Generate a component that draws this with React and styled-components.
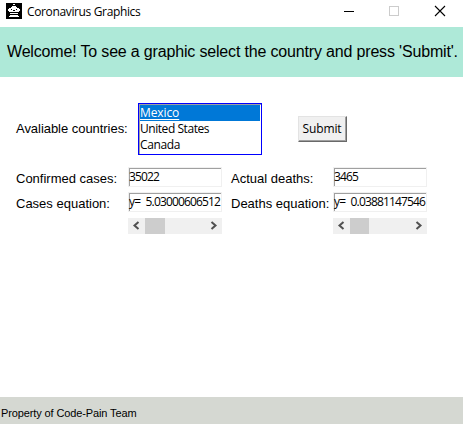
import React from "react";
import styled, { createGlobalStyle } from "styled-components";

const Global = createGlobalStyle`
  * { box-sizing: border-box; }
  body { margin: 0; background: #fff; overflow: hidden; }
`;

const Window = styled.div`
  width: 463px;
  height: 424px;
  display: flex;
  flex-direction: column;
  background: #fff;
  color: #000;
  font-family: "Liberation Sans", Arial, sans-serif;
  white-space: nowrap;
`;

const TitleBar = styled.header`
  height: 27px;
  flex: none;
  display: flex;
  align-items: flex-start;
  padding-left: 6px;
`;

const AppIcon = styled.svg`
  display: block;
  flex: none;
  margin-top: 3px;
`;

const Title = styled.div`
  flex: 1;
  margin-left: 5px;
  font: 12px/16px "Open Sans", "Noto Sans", sans-serif;
  letter-spacing: -0.36px;
  padding-top: 4px;
`;

const Controls = styled.div`
  display: flex;
`;

const Control = styled.svg`
  display: block;
  width: 46px;
  height: 22px;
`;

const Banner = styled.div`
  height: 50px;
  flex: none;
  padding-left: 7px;
  background: #aee9d8;
  font-size: 16px;
  line-height: 49px;
  letter-spacing: -0.17px;
`;

const Body = styled.main`
  flex: 1;
  padding: 26px 0 0 16px;
`;

const CountryRow = styled.div`
  display: flex;
  align-items: center;
  height: 52px;
`;

const Label = styled.label`
  width: ${(p) => p.$width}px;
  flex: none;
  font-size: 13px;
  line-height: 16px;
  letter-spacing: -0.04px;
`;

const ListBox = styled.div`
  width: 124px;
  height: 52px;
  border: 1px solid #0000ff;
  padding: 1px 1px 0 0;
  box-shadow: inset 1px 1px #a0a0a0;
`;

const Option = styled.div`
  height: 16px;
  margin-left: 1px;
  font: 12px/16px "Open Sans", "Noto Sans", sans-serif;
  letter-spacing: ${(p) => p.$track}px;
  color: ${(p) => (p.$selected ? "#fff" : "#000")};
  background: ${(p) => (p.$selected ? "#0078d7" : "transparent")};
  text-decoration: ${(p) => (p.$selected ? "underline" : "none")};
  text-underline-offset: 2px;
`;

const SubmitButton = styled.button`
  width: 49px;
  height: 26px;
  margin-left: 36px;
  padding: 0 1px 0 0;
  background: #f0f0f0;
  border: 1px solid;
  border-color: #e3e3e3 #696969 #696969 #e3e3e3;
  box-shadow: inset -1px -1px #a0a0a0;
  font: 12px/16px "Open Sans", "Noto Sans", sans-serif;
  letter-spacing: -0.15px;
  color: #000;
`;

const Results = styled.div`
  display: grid;
  grid-template-columns: 112px 103px 102px 94px;
  grid-template-rows: 20px 20px 16px;
  row-gap: 5px;
  margin-top: 12px;
`;

const FieldLabel = styled(Label)`
  padding-top: 4px;
  letter-spacing: 0;
`;

const Entry = styled.div`
  width: 94px;
  height: 20px;
  border: 1px solid #f0f0f0;
  box-shadow: inset 1px 1px #a0a0a0, inset -1px -1px #fff;
  padding-top: 1px;
  font: 12px/16px "Open Sans", "Noto Sans", sans-serif;
  letter-spacing: -0.86px;
  word-spacing: 3.2px;
`;

const ScrollBar = styled.div`
  width: 94px;
  height: 16px;
  margin-top: 1px;
  display: flex;
  background: #f0f0f0;
`;

const Arrow = styled.svg`
  display: block;
  width: 17px;
  height: 16px;
  flex: none;
`;

const Track = styled.div`
  flex: 1;
`;

const Thumb = styled.div`
  width: ${(p) => p.$width}px;
  height: 16px;
  background: #cdcdcd;
`;

const Footer = styled.footer`
  height: 27px;
  flex: none;
  padding-left: 1px;
  background: #d5d8d2;
  font-size: 11px;
  line-height: 32px;
  letter-spacing: -0.12px;
`;

function HorizontalScroll({ thumb }) {
  return (
    <ScrollBar>
      <Arrow viewBox="0 0 17 16">
        <path d="M10.5 4 6.5 7.5l4 3.5" fill="none" stroke="#505050" strokeWidth="2" />
      </Arrow>
      <Track>
        <Thumb $width={thumb} />
      </Track>
      <Arrow viewBox="0 0 17 16">
        <path d="M6.5 4l4 3.5-4 3.5" fill="none" stroke="#505050" strokeWidth="2" />
      </Arrow>
    </ScrollBar>
  );
}

export default function App() {
  return (
    <Window>
      <Global />
      <TitleBar>
        <AppIcon width="16" height="16" viewBox="0 0 16 16" shapeRendering="crispEdges">
          <rect width="16" height="16" />
          <path fill="#fff" d="M7 1h2v1H7zM6 3h4v1H6zM5 4h6v1H5zM3 5h10v1H3zM2 6h12v2H2zM3 8h10v1H3zM4 10h8v1H4zM4 12h8v1H4zM3 13h10v1H3z" />
          <path d="M5 6h1v1H5zM10 6h1v1h-1zM7 7h2v1H7z" />
        </AppIcon>
        <Title>Coronavirus Graphics</Title>
        <Controls>
          <Control viewBox="0 0 46 22" shapeRendering="crispEdges">
            <path d="M19 11.5h10" stroke="#000" />
          </Control>
          <Control viewBox="0 0 46 22" shapeRendering="crispEdges">
            <rect x="18.5" y="6.5" width="9" height="9" fill="none" stroke="#ccc" />
          </Control>
          <Control viewBox="0 0 46 22">
            <path d="M18 6l10 10M28 6L18 16" stroke="#000" strokeWidth="1.1" />
          </Control>
        </Controls>
      </TitleBar>
      <Banner>Welcome! To see a graphic select the country and press 'Submit'.</Banner>
      <Body>
        <CountryRow>
          <Label $width={122}>Avaliable countries:</Label>
          <ListBox>
            <Option $selected $track={-0.1}>Mexico</Option>
            <Option $track={-0.45}>United States</Option>
            <Option $track={-0.35}>Canada</Option>
          </ListBox>
          <SubmitButton>Submit</SubmitButton>
        </CountryRow>
        <Results>
          <FieldLabel>Confirmed cases:</FieldLabel>
          <Entry>35022</Entry>
          <FieldLabel>Actual deaths:</FieldLabel>
          <Entry>3465</Entry>
          <FieldLabel>Cases equation:</FieldLabel>
          <Entry>y= 5.03000606512</Entry>
          <FieldLabel>Deaths equation:</FieldLabel>
          <Entry>y= 0.03881147546</Entry>
          <span />
          <HorizontalScroll thumb={20} />
          <span />
          <HorizontalScroll thumb={19} />
        </Results>
      </Body>
      <Footer>Property of Code-Pain Team</Footer>
    </Window>
  );
}
